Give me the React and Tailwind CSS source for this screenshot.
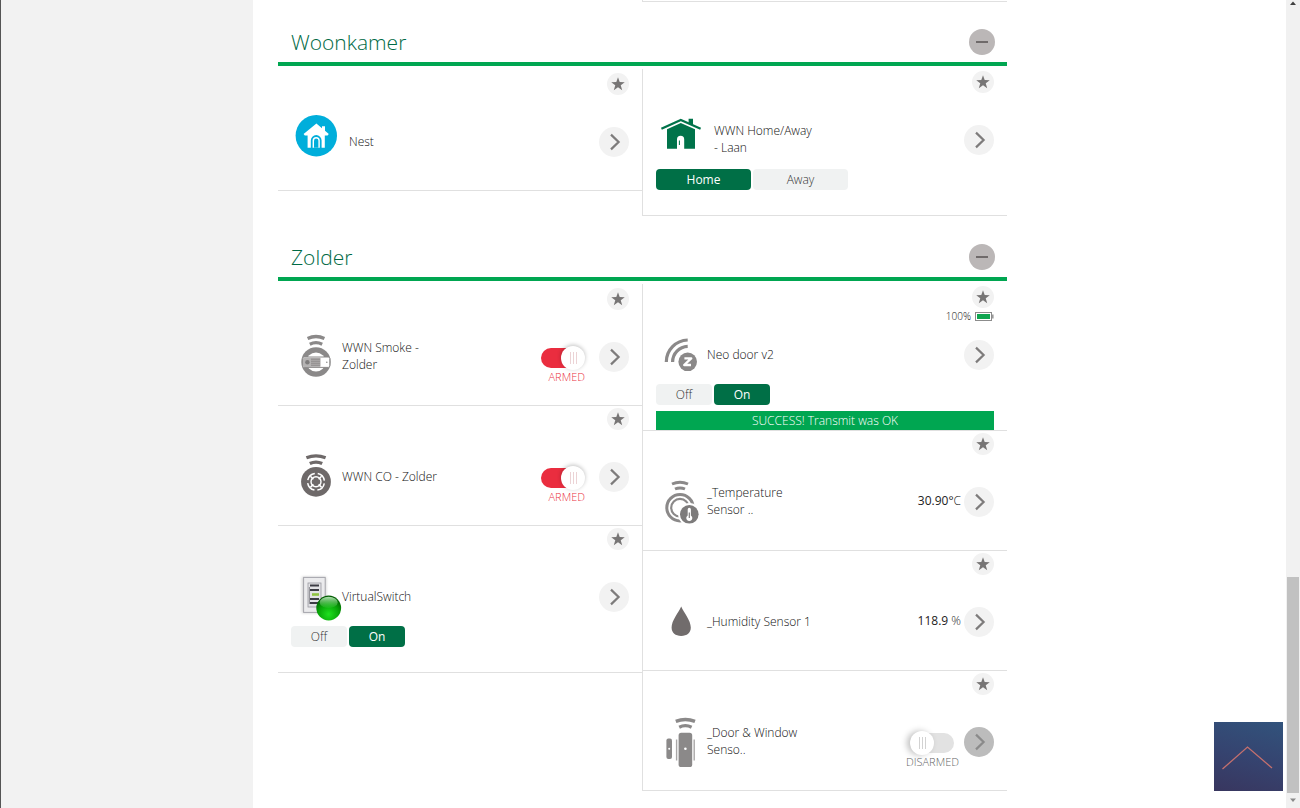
import { useState } from "react";

function Waves({ x = 25, y = 2, wide = 9, color = "#8b8989" }) {
  return (
    <g fill="none" stroke={color} strokeWidth="3.3" transform={`translate(${x} ${y})`}>
      <path d={`M${-wide} 3.4 Q0 -0.4 ${wide} 3.4`} />
      <path d="M-6.2 9.2 Q0 6.2 6.2 9.2" />
    </g>
  );
}

function IconBox({ children }) {
  return (
    <svg viewBox="0 0 50 50" className="size-[50px] shrink-0 overflow-visible" aria-hidden="true">
      {children}
    </svg>
  );
}

function NestIcon() {
  return (
    <IconBox>
      <circle cx="25.3" cy="19.7" r="20.7" fill="#00aedb" />
      <path
        d="M25.4 7.6 L31 12.3 V10.2 H34 V14.8 L37.8 18 L36.6 19.6 H33.8 V31.8 H30.6 V24.5 A5.4 5.4 0 0 0 19.8 24.5 V31.8 H16.6 V19.6 H13.8 L12.6 18 Z"
        fill="#fff"
      />
      <path d="M21.6 31.8 V24.6 A3.6 3.6 0 0 1 28.8 24.6 V31.8 Z" fill="#fff" />
      <path d="M23 31.8 V24.8 A2.2 2.2 0 0 1 27.4 24.8 V31.8 Z" fill="#00aedb" />
    </IconBox>
  );
}

function HomeIcon() {
  return (
    <IconBox>
      <path d="M5.4 14.8 L24.8 6 L44.6 14.8" fill="none" stroke="#00734a" strokeWidth="2.2" />
      <path d="M32.6 4.8 H37 V11 L32.6 9 Z" fill="#00734a" />
      <path
        d="M11 15.2 L24.8 9 L39 15.2 V34.8 H28.2 V25.4 A3.6 3.6 0 0 0 21 25.4 V34.8 H11 Z"
        fill="#00734a"
      />
      <path d="M23.4 26.5 V31" stroke="#00734a" strokeWidth="1" />
    </IconBox>
  );
}

function SmokeIcon() {
  return (
    <IconBox>
      <Waves y="4" wide={8.4} />
      <circle cx="25" cy="31" r="14.7" fill="#8b8989" />
      <circle cx="25" cy="31" r="9.6" fill="#fff" />
      <rect x="11.6" y="26" width="27.2" height="10.4" rx="1.5" fill="#fff" stroke="#8b8989" strokeWidth="1" />
      <rect x="12" y="26.4" width="17.6" height="9.6" rx="1" fill="#b5b3b3" />
      <circle cx="16.4" cy="31.2" r="2.2" fill="#7d7b7b" />
      <path d="M20 28.2 H29 M20 30.2 H29 M20 32.2 H29 M20 34.2 H29" stroke="#7d7b7b" strokeWidth="0.8" />
      <circle cx="35.8" cy="31.2" r="0.8" fill="#8b8989" />
    </IconBox>
  );
}

function CoIcon() {
  return (
    <IconBox>
      <Waves y="3.4" wide={9.6} color="#6e6969" />
      <circle cx="25" cy="30.8" r="14.9" fill="#6e6969" />
      <circle cx="25" cy="30.8" r="8.4" fill="none" stroke="#fff" strokeWidth="1.5" strokeDasharray="10.2 3" strokeDashoffset="-1.5" />
      <circle cx="25" cy="30.8" r="5" fill="none" stroke="#fff" strokeWidth="1.4" />
      <path d="M19.4 25.2 L22.4 28.2 M30.6 25.2 L27.6 28.2 M19.4 36.4 L22.4 33.4 M30.6 36.4 L27.6 33.4" stroke="#fff" strokeWidth="1.5" />
    </IconBox>
  );
}

function VirtualSwitchIcon() {
  return (
    <IconBox>
      <defs>
        <radialGradient id="led" cx="0.5" cy="0.75" r="0.7">
          <stop offset="0" stopColor="#1fe01f" />
          <stop offset="0.6" stopColor="#07a407" />
          <stop offset="1" stopColor="#035c03" />
        </radialGradient>
        <linearGradient id="shine" x1="0" y1="0" x2="0" y2="1">
          <stop offset="0" stopColor="#c4f0c4" stopOpacity="0.9" />
          <stop offset="1" stopColor="#5fd05f" stopOpacity="0.15" />
        </linearGradient>
        <filter id="soft" x="-30%" y="-30%" width="160%" height="160%">
          <feGaussianBlur stdDeviation="1.4" />
        </filter>
      </defs>
      <rect x="11" y="6" width="24" height="36" fill="#999" opacity="0.5" filter="url(#soft)" />
      <rect x="12.6" y="6.4" width="21.6" height="35" fill="#ebebed" stroke="#a5a5ac" strokeWidth="1" />
      <rect x="17" y="12" width="13" height="24" fill="#e2e2e5" stroke="#9a9aa0" strokeWidth="0.8" />
      <path d="M19 14.5 H28 M19 19 H28 M19 28 H28 M19 32 H28" stroke="#3c3c44" strokeWidth="1.8" />
      <path d="M21 23.5 H28" stroke="#8fc340" strokeWidth="2.6" />
      <path d="M18.4 16 V33" stroke="#77777d" strokeWidth="0.8" />
      <circle cx="37.7" cy="37" r="12.4" fill="url(#led)" />
      <ellipse cx="37.7" cy="31.4" rx="9" ry="5.6" fill="url(#shine)" />
    </IconBox>
  );
}

function ZwaveIcon() {
  return (
    <IconBox>
      <g fill="none" stroke="#8b8989" strokeWidth="3.2">
        <path d="M10.3 33 A22 22 0 0 1 31.7 11" />
        <path d="M16.6 33 A15.6 15.6 0 0 1 31.7 17.4" />
      </g>
      <circle cx="31.7" cy="32.8" r="11" fill="#fff" />
      <circle cx="31.7" cy="32.8" r="9.3" fill="#8b8989" />
      <path d="M28.4 29.4 H35.2 L28.2 36 H35" fill="none" stroke="#fff" strokeWidth="2.4" strokeLinejoin="round" />
    </IconBox>
  );
}

function TemperatureIcon() {
  return (
    <IconBox>
      <g fill="none" stroke="#8b8989">
        <path d="M16 8 Q24 4.4 32 8" strokeWidth="3" />
        <path d="M19 13 Q24 10.8 29 13" strokeWidth="3" />
        <circle cx="24" cy="31.7" r="13.2" strokeWidth="3" />
        <circle cx="24" cy="31.7" r="8.8" strokeWidth="2.2" />
      </g>
      <circle cx="33.3" cy="38.3" r="11.2" fill="#fff" />
      <circle cx="33.3" cy="38.3" r="9.3" fill="#7d7b7b" />
      <path d="M31.7 33.4 A1.6 1.6 0 0 1 34.9 33.4 V39.4 A3 3 0 1 1 31.7 39.4 Z" fill="#fff" />
      <path d="M33.3 36.4 V42" stroke="#7d7b7b" strokeWidth="1.2" />
    </IconBox>
  );
}

function DropIcon() {
  return (
    <IconBox>
      <path d="M25.2 10.4 C28 17 34.8 24 34.8 31.6 C34.8 37 31 40 25.2 40 C19.4 40 15.6 37 15.6 31.6 C15.6 24 22.4 17 25.2 10.4 Z" fill="#716c6c" />
    </IconBox>
  );
}

function DoorIcon() {
  return (
    <IconBox>
      <Waves x="29.4" y="2" wide={9.6} />
      <rect x="10.4" y="22.6" width="5.6" height="20.4" rx="2" fill="#8b8989" />
      <circle cx="13.2" cy="32.8" r="1" fill="#fff" />
      <path d="M20.6 23.4 V44.6 M38.2 23.4 V44.6" stroke="#a9a7a7" strokeWidth="1.4" />
      <rect x="22.6" y="16.8" width="13.6" height="34.2" rx="2.6" fill="#8b8989" />
      <circle cx="29.4" cy="32.8" r="1.3" fill="#fff" />
    </IconBox>
  );
}

function StarButton({ name }) {
  return (
    <button aria-label={`Favourite ${name}`} className="flex size-[22px] items-center justify-center rounded-full bg-[#f2f2f2]">
      <svg viewBox="0 0 24 24" className="size-[14px]" fill="#777575" aria-hidden="true">
        <path d="M12 0.5 L14.9 8.7 L23.6 8.9 L16.7 14.2 L19.2 22.6 L12 17.6 L4.8 22.6 L7.3 14.2 L0.4 8.9 L9.1 8.7 Z" />
      </svg>
    </button>
  );
}

function DetailButton({ name, dim }) {
  return (
    <button
      aria-label={`Open ${name}`}
      className={`mt-[2px] flex size-[30px] shrink-0 items-center justify-center rounded-full ${dim ? "bg-[#bcbcbc]" : "bg-[#f2f2f2]"}`}
    >
      <svg viewBox="0 0 30 30" className="size-[30px]" fill="none" stroke={dim ? "#8a8a8a" : "#7d7b7b"} strokeWidth="2.2" aria-hidden="true">
        <path d="M12 7.6 L19.6 15 L12 22.4" />
      </svg>
    </button>
  );
}

function ArmSwitch({ initial, name }) {
  const [armed, setArmed] = useState(initial);
  return (
    <label
      className={`mt-[20px] flex shrink-0 flex-col self-start text-[11px] leading-[18px] font-light ${
        armed ? "mr-[14px] items-end text-[#ea3343]" : "mr-[5px] items-center text-[#666]"
      }`}
    >
      <span className="grid h-[22px] w-[44px] items-center">
        <input
          type="checkbox"
          aria-label={`${name} armed`}
          checked={armed}
          onChange={(e) => setArmed(e.target.checked)}
          className="col-start-1 row-start-1 h-[20px] w-full appearance-none rounded-full bg-[#e2e2e2] checked:w-[36px] checked:bg-[#ea2d3f]"
        />
        <span
          className={`pointer-events-none col-start-1 row-start-1 flex size-[24px] items-center justify-center gap-[2px] rounded-full bg-white ${
            armed ? "justify-self-end shadow-[0_-1px_4px_rgba(0,0,0,0.25)]" : "justify-self-start shadow-[-3px_0_6px_rgba(0,0,0,0.25)]"
          }`}
        >
          {[0, 1, 2].map((i) => (
            <span key={i} className={`h-[12px] w-px ${armed ? "bg-[#ecd3d5]" : "bg-[#d2d2d2]"}`} />
          ))}
        </span>
      </span>
      {armed ? "ARMED" : "DISARMED"}
    </label>
  );
}

function Segments({ options, initial, wide }) {
  const [value, setValue] = useState(initial);
  return (
    <div className="flex gap-[2px]">
      {options.map((o) => (
        <button
          key={o}
          aria-pressed={o === value}
          onClick={() => setValue(o)}
          className={`h-[21px] rounded-[4px] pt-px text-[12px] leading-[20px] ${wide ? "w-[95px]" : "w-[56px]"} ${
            o === value ? "bg-[#006f46] text-white" : "bg-[#f0f2f2] font-light text-[#333]"
          }`}
        >
          {o}
        </button>
      ))}
    </div>
  );
}

function Battery({ level }) {
  return (
    <>
      <span className="text-[10px] leading-[16px] font-light text-[#111]">{level}%</span>
      <svg viewBox="0 0 19 9" className="h-[9px] w-[19px]" aria-hidden="true">
        <rect x="0.5" y="0.5" width="16" height="8" fill="#fff" stroke="#8c8c8c" />
        <rect x="17" y="2.5" width="1.6" height="4" fill="#9a9a9a" />
        <rect x="2" y="2" width="13" height="5" fill="#0fa550" />
      </svg>
    </>
  );
}

function Card({ icon, name, lines, wideIcon, value, unit, arm, segments, battery, message, dim }) {
  return (
    <article className={`flex flex-col border-b border-[#e0e0e0] px-[13px] pt-[2px] ${segments ? "h-[147px]" : "h-[120px]"}`}>
      <div className="flex justify-end">
        <StarButton name={name} />
      </div>
      <div className="flex h-4 shrink-0 items-end justify-end gap-[4px]">
        {battery && (
          <div className="flex items-center gap-[4px]">
            <Battery level={battery} />
          </div>
        )}
      </div>
      <div className="flex h-[60px] shrink-0 items-center">
        {icon}
        <h3 className={`flex-1 text-[12px] leading-[17px] font-light text-[#111] ${wideIcon ? "ml-[8px]" : "ml-px"}`}>
          {lines.map((l) => (
            <span key={l} className="block">
              {l}
            </span>
          ))}
        </h3>
        {value && (
          <p className="mr-[3px] text-[12px] text-[#222]">
            {value}
            <span className="font-light">{unit}</span>
          </p>
        )}
        {arm !== undefined && <ArmSwitch initial={arm} name={name} />}
        <DetailButton name={name} dim={dim} />
      </div>
      {segments && <Segments {...segments} />}
      {message && <p className="mt-[6px] bg-[#00a651] text-center text-[12px] leading-[19px] font-light text-white">{message}</p>}
    </article>
  );
}

function Room({ title, left, right }) {
  return (
    <section className="pb-px">
      <header className="flex h-16 items-center justify-between border-b-4 border-[#00a651] pt-[19px] pr-[12px] pl-[13px]">
        <h2 className="text-[21px] leading-[30px] font-light text-[#006a45]">{title}</h2>
        <button aria-label={`Collapse ${title}`} className="flex size-[26px] items-center justify-center rounded-full bg-[#bbb7b7]">
          <span className="h-[2px] w-[12px] bg-[#6f6a6a]" />
        </button>
      </header>
      <div className="grid grid-cols-[364fr_365fr] items-start">
        <div className="pt-[5px]">{left}</div>
        <div className="pt-[3px]">
          <div className="border-l border-[#e0e0e0]">{right}</div>
        </div>
      </div>
    </section>
  );
}

const onOff = { options: ["Off", "On"], initial: "On" };

export default function App() {
  return (
    <div className="flex min-h-screen bg-white font-['Open_Sans',sans-serif]">
      <aside className="w-[253px] shrink-0 border-l border-[#555] bg-[#f2f2f2]" />
      <main className="min-w-0 flex-1 pl-[25px]">
        <div className="w-full max-w-[729px]">
          <div className="grid h-[2px] grid-cols-[364fr_365fr]">
            <div className="col-start-2 border-b border-l border-[#e0e0e0]" />
          </div>
          <Room
            title="Woonkamer"
            left={<Card icon={<NestIcon />} name="Nest" lines={["Nest"]} wideIcon />}
            right={
              <Card
                icon={<HomeIcon />}
                name="WWN Home/Away - Laan"
                lines={["WWN Home/Away", "- Laan"]}
                wideIcon
                segments={{ options: ["Home", "Away"], initial: "Home", wide: true }}
              />
            }
          />
          <Room
            title="Zolder"
            left={
              <>
                <Card icon={<SmokeIcon />} name="WWN Smoke - Zolder" lines={["WWN Smoke -", "Zolder"]} arm={true} />
                <Card icon={<CoIcon />} name="WWN CO - Zolder" lines={["WWN CO - Zolder"]} arm={true} />
                <Card icon={<VirtualSwitchIcon />} name="VirtualSwitch" lines={["VirtualSwitch"]} segments={onOff} />
              </>
            }
            right={
              <>
                <Card
                  icon={<ZwaveIcon />}
                  name="Neo door v2"
                  lines={["Neo door v2"]}
                  battery={100}
                  segments={onOff}
                  message="SUCCESS! Transmit was OK"
                />
                <Card icon={<TemperatureIcon />} name="Temperature Sensor" lines={["_Temperature", "Sensor .."]} value="30.90°" unit="C" />
                <Card icon={<DropIcon />} name="Humidity Sensor 1" lines={["_Humidity Sensor 1"]} value="118.9" unit=" %" />
                <Card icon={<DoorIcon />} name="Door & Window Sensor" lines={["_Door & Window", "Senso.."]} arm={false} dim />
              </>
            }
          />
        </div>
      </main>
      <div className="sticky top-0 flex h-screen w-[14px] shrink-0 flex-col items-center justify-between bg-[#f1f1f1]" aria-hidden="true">
        <svg viewBox="0 0 14 8" className="h-[8px] w-[14px]">
          <path d="M4 5 L7 1.5 L10 5 Z" fill="#404040" />
        </svg>
        <div className="flex w-full flex-1 flex-col justify-end px-px">
          <div className="h-[216px] bg-[#c1c1c1]" />
        </div>
        <svg viewBox="0 0 14 15" className="h-[15px] w-[14px]">
          <path d="M4 5.5 L7 9 L10 5.5 Z" fill="#8a8a8a" />
        </svg>
      </div>
      <button
        aria-label="Back to top"
        className="fixed right-[17px] bottom-[17px] size-[69px] bg-linear-15 from-[#38365f] via-[#354470] to-[#31537c]"
      >
        <svg viewBox="0 0 69 69" className="size-full" fill="none" stroke="#c4706e" strokeWidth="1.3" aria-hidden="true">
          <path d="M8.5 47 L33.5 25 L58 46" />
        </svg>
      </button>
    </div>
  );
}
